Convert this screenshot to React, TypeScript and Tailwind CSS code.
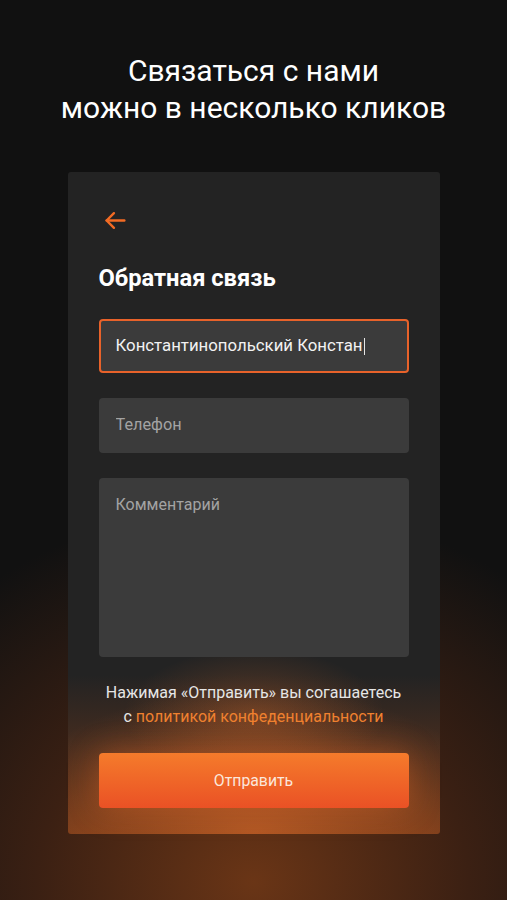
import React from 'react'

export default function App() {
  return (
    <div
      className="min-h-[900px] w-full flex flex-col items-center bg-[radial-gradient(ellipse_85%_42%_at_50%_98%,#6a3516_0%,#3b2013_50%,#111111_100%)] font-['Roboto',sans-serif]"
    >
      <h1 className="mt-[52px] text-center text-[30px] leading-[37px] text-white">
        Связаться с нами
        <br />
        можно в несколько кликов
      </h1>

      {/* Card */}
      <div className="mt-[46px] w-[372px] h-[662px] rounded-[3px] px-[31px] pt-[36px] flex flex-col bg-[radial-gradient(ellipse_70%_22%_at_50%_100%,rgba(235,115,45,0.55),transparent_100%),radial-gradient(ellipse_35%_10%_at_50%_82%,rgba(200,100,40,0.35),transparent_100%),linear-gradient(to_bottom,#232323_76%,#6e3719_100%)]">
        <button className="w-[26px] h-[24px] ml-[4px] text-[#f26b24]">
          <svg viewBox="0 0 24 24" className="w-[25px] h-[25px]" fill="none" stroke="currentColor" strokeWidth="2.3" strokeLinecap="round" strokeLinejoin="round">
            <path d="M20.5 12H3.5" />
            <path d="M10.5 5l-7 7 7 7" />
          </svg>
        </button>

        <h2 className="mt-[31px] text-[23.7px] leading-[30px] font-bold text-white">Обратная связь</h2>

        <div className="mt-[26px] flex flex-col gap-[25px]">
          <div className="h-[54px] rounded-[4px] border-2 border-[#e8622a] bg-[#3b3b3b] flex items-center px-[15px]">
            <span className="text-[16.8px] text-[#f2f2f2] whitespace-nowrap">Константинопольский Констан</span>
            <span className="ml-[1px] w-[1px] h-[17px] bg-[#e6e6e6]" />
          </div>
          <div className="h-[55px] rounded-[4px] bg-[#3b3b3b] flex items-center px-[17px]">
            <input
              placeholder="Телефон"
              className="w-full bg-transparent outline-none text-[16.3px] text-[#f2f2f2] placeholder:text-[#a3a3a3]"
            />
          </div>
          <div className="h-[179px] rounded-[4px] bg-[#3b3b3b] px-[17px] pt-[17px]">
            <textarea
              placeholder="Комментарий"
              className="w-full h-full resize-none bg-transparent outline-none text-[16px] leading-[20px] text-[#f2f2f2] placeholder:text-[#a3a3a3]"
            />
          </div>
        </div>

        <p className="mt-[24px] text-center text-[16px] leading-[24px] text-[#e6e6e6]">
          Нажимая «Отправить» вы согашаетесь
          <br />
          с <a className="text-[#f0812f]">политикой конфеденциальности</a>
        </p>

        <button className="mt-[24px] h-[55px] rounded-[4px] bg-[linear-gradient(to_bottom,#f57b2b,#ea5125)] text-[15.8px] text-[#fbe7dc] shadow-[0_0_30px_rgba(240,110,40,0.35)]">
          Отправить
        </button>
      </div>
    </div>
  )
}
